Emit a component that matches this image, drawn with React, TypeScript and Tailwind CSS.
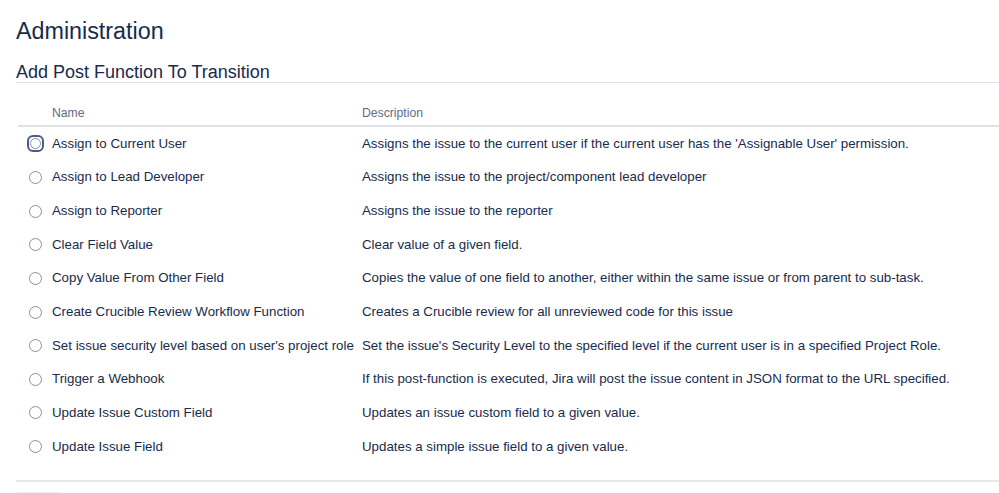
import React from "react";

const rows: [string, string][] = [
  ["Assign to Current User", "Assigns the issue to the current user if the current user has the 'Assignable User' permission."],
  ["Assign to Lead Developer", "Assigns the issue to the project/component lead developer"],
  ["Assign to Reporter", "Assigns the issue to the reporter"],
  ["Clear Field Value", "Clear value of a given field."],
  ["Copy Value From Other Field", "Copies the value of one field to another, either within the same issue or from parent to sub-task."],
  ["Create Crucible Review Workflow Function", "Creates a Crucible review for all unreviewed code for this issue"],
  ["Set issue security level based on user's project role", "Set the issue's Security Level to the specified level if the current user is in a specified Project Role."],
  ["Trigger a Webhook", "If this post-function is executed, Jira will post the issue content in JSON format to the URL specified."],
  ["Update Issue Custom Field", "Updates an issue custom field to a given value."],
  ["Update Issue Field", "Updates a simple issue field to a given value."],
];

export default function App() {
  return (
    <div
      className="w-[999px] h-[493px] overflow-hidden bg-white text-[#172b4d]"
      style={{ fontFamily: '"Liberation Sans", Arial, sans-serif' }}
    >
      <div className="pl-4">
        <h1 className="pt-[16px] text-[23.3px] leading-[30px] text-[#172b4d]">Administration</h1>
        <h2 className="mt-[16px] text-[18px] leading-[20px] text-[#172b4d] border-b border-[#dfe1e6]">
          Add Post Function To Transition
        </h2>
        <div className="mt-[19px] ml-[2px]">
          <div className="flex h-[25px] items-center border-b-2 border-[#dfe1e6] text-[12.2px] text-[#5e6c84]">
            <div className="w-[34px]" />
            <div className="w-[310px]">Name</div>
            <div>Description</div>
          </div>
          {rows.map(([name, desc], i) => (
            <div key={name} className="flex h-[33.65px] items-center text-[13.3px] text-[#172b4d]">
              <div className="w-[34px] flex items-center justify-center pl-[1px]">
                {i === 0 ? (
                  <span className="flex h-[17px] w-[17px] items-center justify-center rounded-[6px] border-2 border-[#4a5a8f]">
                    <span className="h-[11px] w-[11px] rounded-full border border-[#8a8f99] bg-white" />
                  </span>
                ) : (
                  <span className="h-[13px] w-[13px] rounded-full border border-[#8a8f99] bg-white" />
                )}
              </div>
              <div className="w-[310px] whitespace-nowrap">{name}</div>
              <div className="whitespace-nowrap">{desc}</div>
            </div>
          ))}
        </div>
        <div className="mt-[17px] h-[2px] bg-[#e8e8e8]" />
        <div className="mt-[10px] ml-[1px] h-[1px] w-[44px] bg-[#eeeeee]" />
      </div>
    </div>
  );
}
